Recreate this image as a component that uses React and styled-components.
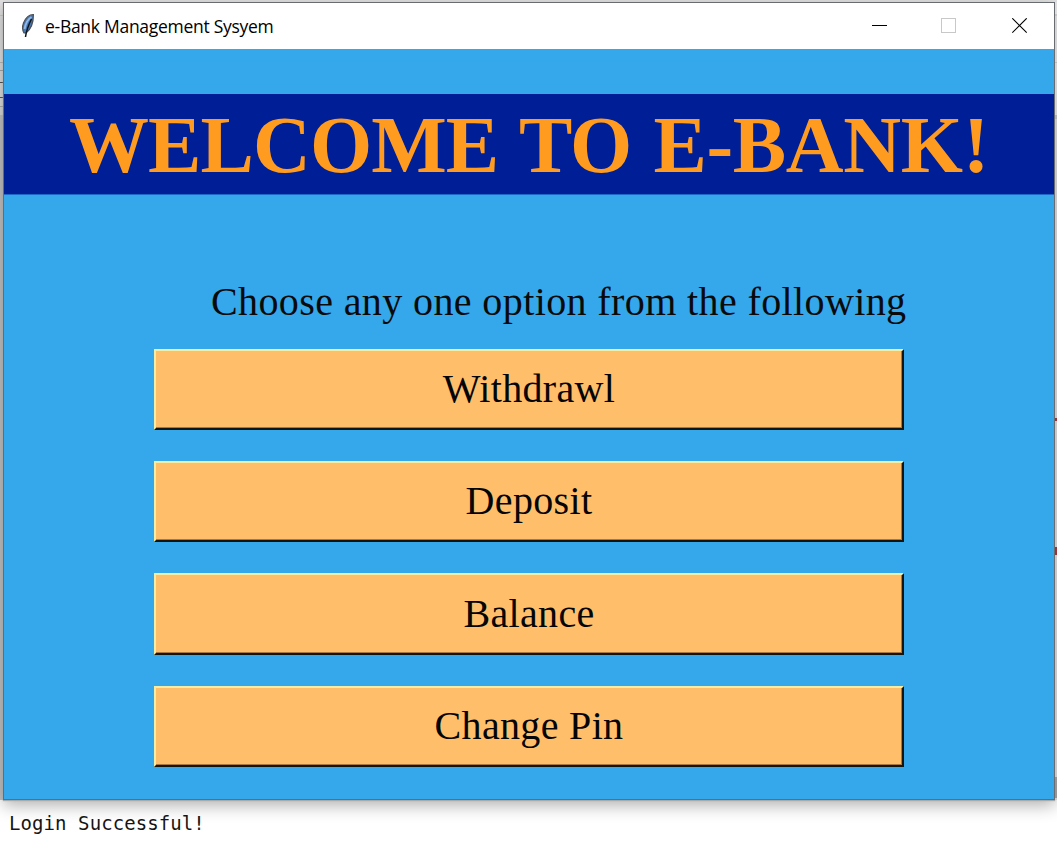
import React from "react";
import styled, { createGlobalStyle } from "styled-components";

const GlobalStyle = createGlobalStyle`
  * { box-sizing: border-box; }
  body { margin: 0; background: #fff; overflow: hidden; }
`;

const Desktop = styled.div`
  width: 1057px;
  height: 847px;
  padding-top: 2px;
  display: flex;
  flex-direction: column;
  background: linear-gradient(#e4e4e4 0 2px, transparent 2px);
  overflow: hidden;
`;

const Stage = styled.div`
  display: flex;
  height: 798px;
  flex: none;
`;

const LeftEdge = styled.div`
  width: 3px;
  background: linear-gradient(
    #e3e3e3 0 13px, #cdcdcd 13px 14px, #e3e3e3 14px 60px, #bcbcbc 60px 61px,
    #e0e0e0 61px 68px, #a8a8a8 68px 69px, #dedede 69px 80px, #555 80px 81px,
    #dedede 81px 95px, #555 95px 96px, #dedede 96px 104px, #b0b0b0 104px 105px,
    #dadada 105px 113px, #c4c4c4 113px
  );
`;

const RightEdge = styled.div`
  position: relative;
  width: 2px;
  overflow: hidden;
  background: linear-gradient(
    #dedede 0 12px, #c6c6c6 12px 14px, #d4d4d4 14px 60px, #bdbdbd 60px 61px,
    #d4d4d4 61px 113px, #b4b4b4 113px 117px, #c8c8c8 117px 775px, #969696 775px 796px, #ccc 796px
  );
`;

const CodeSliver = styled.span`
  position: absolute;
  left: 0;
  top: ${(p) => p.$top}px;
  width: 2px;
  height: ${(p) => p.$size}px;
  background: #98343a;
`;

const Window = styled.main`
  width: 1052px;
  height: 798px;
  display: flex;
  flex-direction: column;
  border: 1px solid #686c70;
  background: #35a7eb;
  box-shadow: 0 1px 1px #aaa, 0 5px 16px rgba(0, 0, 0, 0.32);
`;

const TitleBar = styled.header`
  height: 46px;
  flex: none;
  display: flex;
  align-items: center;
  background: #fff;
`;

const Feather = styled.svg`
  width: 16px;
  height: 26px;
  margin: 0 9px 0 16px;
`;

const Title = styled.span`
  flex: 1;
  font: 17.5px/24px "Open Sans", "Noto Sans", sans-serif;
  letter-spacing: -0.28px;
  color: #000;
`;

const Controls = styled.div`
  display: flex;
  height: 46px;
`;

const Control = styled.button`
  display: flex;
  align-items: flex-start;
  width: 70px;
  height: 46px;
  padding: 15px 0 0 ${(p) => (p.$muted ? 27 : 28)}px;
  border: 0;
  background: none;
  color: ${(p) => (p.$muted ? "#c8c8c8" : "#000")};
`;

const Banner = styled.h1`
  height: 100px;
  margin: 45px 0 0;
  padding-left: 65px;
  flex: none;
  background: #001e96;
  box-shadow: 0 1px rgba(0, 30, 150, 0.45);
  color: #ff9b1e;
  font: bold 80px/103px "Liberation Serif", serif;
  letter-spacing: -0.3px;
  white-space: nowrap;
`;

const TightWords = styled.span`
  letter-spacing: -0.9px;
  word-spacing: 3px;
`;

const Prompt = styled.p`
  margin: 84px 0 0 207px;
  height: 48px;
  flex: none;
  font: 40px/48px "Liberation Serif", serif;
  letter-spacing: 0.39px;
  color: #0a0a0a;
  white-space: nowrap;
`;

const Options = styled.div`
  display: flex;
  flex-direction: column;
  gap: 31.3px;
  margin: 22.5px 0 0 150px;
  width: 750px;
`;

const OptionButton = styled.button`
  height: 81.2px;
  padding: 0 0 0.6px;
  border: 2px solid;
  border-color: #f4eda5 #15140f #15140f #f4eda5;
  background: #ffbe6a;
  box-shadow: inset -1px -1px #a9783e;
  color: #050505;
  font: 40px/48px "Liberation Serif", serif;
  letter-spacing: 0.34px;
`;

const ConsoleLine = styled.pre`
  margin: 11px 0 0 9px;
  font: 19px/24px "DejaVu Sans Mono", monospace;
  letter-spacing: 0.08px;
  color: #151515;
`;

const OPTIONS = ["Withdrawl", "Deposit", "Balance", "Change Pin"];

export default function App() {
  return (
    <>
      <GlobalStyle />
      <Desktop>
        <Stage>
          <LeftEdge />
          <Window>
            <TitleBar>
              <Feather viewBox="0 0 16 26">
                <path d="M13.4 1.500C9 1.500 5.500 5 3.500 10 2 14 2.200 17 4 20L6 20C10 17 13.500 12 13.400 1.500Z" fill="#4777b3" stroke="#4a4e55" strokeWidth="1.2" />
                <path d="M11.500 4C8 6 5.500 11 4.500 16" fill="none" stroke="#8fb8e6" strokeWidth="2" />
                <path d="M11.500 6C9 11 6.500 16 5.500 24" fill="none" stroke="#10151c" strokeWidth="1.5" />
              </Feather>
              <Title>e-Bank Management Sysyem</Title>
              <Controls>
                <Control aria-label="Minimize">
                  <svg width="16" height="16" shapeRendering="crispEdges"><path d="M0 7.5H15" stroke="currentColor" /></svg>
                </Control>
                <Control $muted aria-label="Maximize">
                  <svg width="16" height="16" shapeRendering="crispEdges"><path d="M.5 .5H14.5V14.5H.5Z" fill="none" stroke="currentColor" /></svg>
                </Control>
                <Control aria-label="Close">
                  <svg width="16" height="16"><path d="M.3 .3L14.7 14.7M14.7 .3L.3 14.7" stroke="currentColor" strokeWidth="1.1" /></svg>
                </Control>
              </Controls>
            </TitleBar>
            <Banner><TightWords>WELCOME TO </TightWords>E-BANK!</Banner>
            <Prompt>Choose any one option from the following</Prompt>
            <Options>
              {OPTIONS.map((label) => (
                <OptionButton key={label}>{label}</OptionButton>
              ))}
            </Options>
          </Window>
          <RightEdge>
            <CodeSliver $top={416} $size={3} />
            <CodeSliver $top={545} $size={8} />
          </RightEdge>
        </Stage>
        <ConsoleLine>Login Successful!</ConsoleLine>
      </Desktop>
    </>
  );
}
